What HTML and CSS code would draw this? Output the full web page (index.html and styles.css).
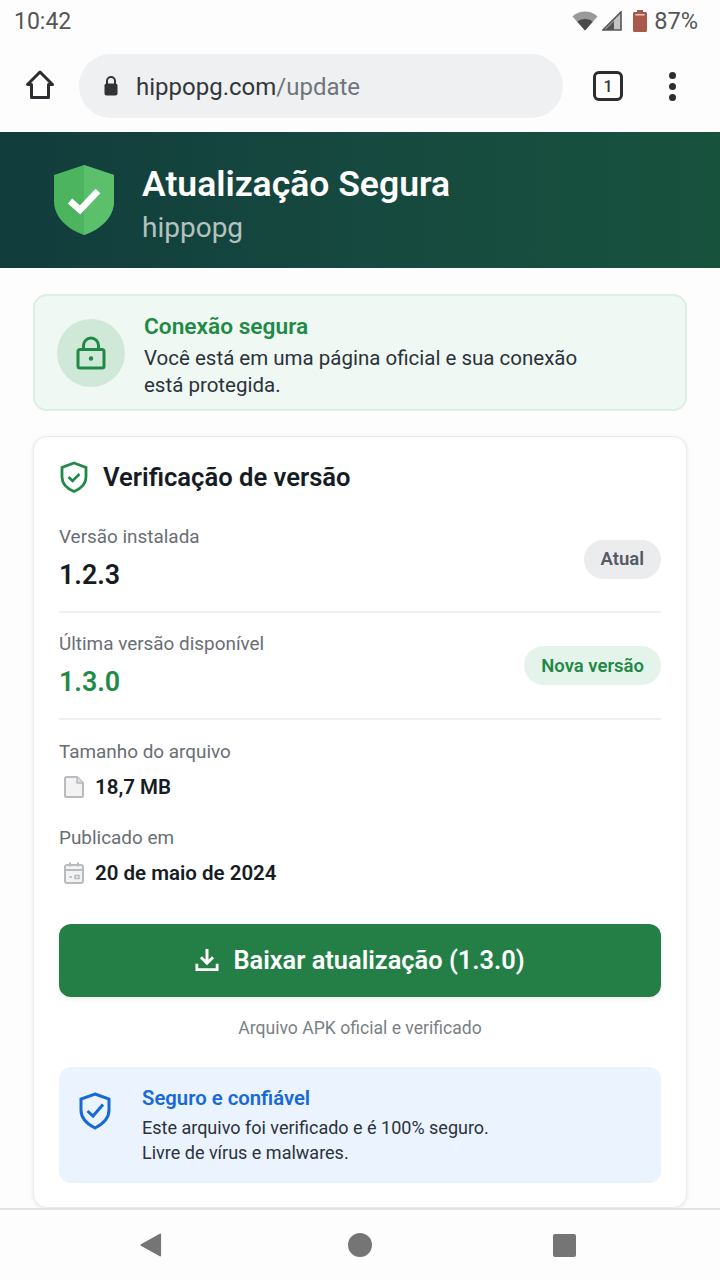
FILE: index.html
```html
<!DOCTYPE html>
<html lang="pt-BR">

<head>
    <meta charset="UTF-8">
    <meta name="viewport" content="width=device-width, initial-scale=1.0">
    <title>Atualização Segura</title>
    <link rel="stylesheet" href="styles.css">
</head>

<body>
    <div class="status-bar">
        <span class="clock">10:42</span>
        <div class="status-icons">
            <svg class="wifi" width="26" height="20" viewBox="0 0 26 20"><path d="M13 19.5 0.5 5.5C4 2.3 8.300 0.500 13 0.500S22 2.300 25.500 5.500Z" fill="#9a9a9a"/><path d="M13 19.500 5.300 10.800C7.300 9 10 8 13 8S18.700 9 20.700 10.800Z" fill="#4a4a4a"/></svg>
            <svg class="signal" width="20" height="20" viewBox="0 0 20 20"><path d="M19 1V19H1Z" fill="#c4c4c4"/><path d="M12 10V19H3L12 10Z" fill="#555"/><path d="M19 1V19H1Z" fill="none" stroke="#555" stroke-width="1.600"/></svg>
            <svg class="battery" width="14" height="22" viewBox="0 0 14 22"><path d="M4 0H10V2H12.500C13.300 2 14 2.700 14 3.500V20.500C14 21.300 13.300 22 12.500 22H1.500C.7 22 0 21.300 0 20.500V3.500C0 2.700 .7 2 1.500 2H4Z" fill="#a9584c"/><rect x="2.500" y="4" width="9" height="1.500" fill="#e5c9c4"/></svg>
            <span class="battery-text">87%</span>
        </div>
    </div>

    <div class="toolbar">
        <svg class="home-icon" width="32" height="32" viewBox="0 0 32 32"><path d="M16 3 3.500 15.500H7.500V28.500H24.500V15.500H28.500Z" fill="none" stroke="#2b2d30" stroke-width="3" stroke-linejoin="round"/></svg>
        <div class="omnibox">
            <svg width="14" height="20" viewBox="0 0 14 20"><path d="M3 8V5a4 4 0 0 1 8 0v3" fill="none" stroke="#333" stroke-width="2"/><rect x="0.500" y="7.500" width="13" height="12" rx="2" fill="#333"/></svg>
            <span class="url">hippopg.com<span class="url-path">/update</span></span>
        </div>
        <div class="tabs-btn">1</div>
        <div class="menu-btn"><i></i><i></i><i></i></div>
    </div>

    <header class="app-header">
        <svg width="62" height="72" viewBox="0 0 62 72">
            <path d="M31 1 61 11V37C61 53 48 65 31 71 14 65 1 53 1 37V11Z" fill="#4cb45e"/>
            <path d="M31 1 61 11V37C61 53 48 65 31 71Z" fill="#5cbf6c"/>
            <path d="M17 37 27 46 45 27" fill="none" stroke="#fff" stroke-width="6.500"/>
        </svg>
        <div>
            <h1>Atualização Segura</h1>
            <p>hippopg</p>
        </div>
    </header>

    <main class="content">
        <section class="secure-banner">
            <div class="lock-circle">
                <svg width="30" height="34" viewBox="0 0 30 34"><path d="M7.500 14V9.500a7.500 7.500 0 0 1 15 0V14" fill="none" stroke="#1f8a46" stroke-width="3"/><rect x="2" y="13.500" width="26" height="18.500" rx="2" fill="none" stroke="#1f8a46" stroke-width="3"/><circle cx="15" cy="22.500" r="2.200" fill="#1f8a46"/></svg>
            </div>
            <div class="banner-text">
                <h2>Conexão segura</h2>
                <p>Você está em uma página oficial e sua conexão<br>está protegida.</p>
            </div>
        </section>

        <section class="card">
            <div class="card-title">
                <svg width="28" height="32" viewBox="0 0 28 32"><path d="M14 2 26 6.500V16C26 23 21 27.500 14 30.500 7 27.500 2 23 2 16V6.500Z" fill="none" stroke="#1f8a46" stroke-width="2.800"/><path d="M8.500 16 12.500 20 19.500 13" fill="none" stroke="#1f8a46" stroke-width="2.600"/></svg>
                <h2>Verificação de versão</h2>
            </div>

            <div class="version-row">
                <div>
                    <div class="label">Versão instalada</div>
                    <div class="version">1.2.3</div>
                </div>
                <span class="pill pill-gray">Atual</span>
            </div>
            <div class="version-row">
                <div>
                    <div class="label">Última versão disponível</div>
                    <div class="version version-new">1.3.0</div>
                </div>
                <span class="pill pill-green">Nova versão</span>
            </div>

            <div class="details">
                <div class="label">Tamanho do arquivo</div>
                <div class="detail-value">
                    <svg width="20" height="22" viewBox="0 0 20 22"><path d="M2.500 1H13L19 7V19.500C19 20.300 18.300 21 17.500 21H2.500C1.700 21 1 20.300 1 19.500V2.500C1 1.700 1.700 1 2.500 1Z" fill="#f3f3f4" stroke="#b9bbbf" stroke-width="2"/><path d="M13 1V7H19" fill="#dcdde0" stroke="#b9bbbf" stroke-width="1.500"/></svg>
                    <span>18,7 MB</span>
                </div>
                <div class="label label-date">Publicado em</div>
                <div class="detail-value">
                    <svg width="20" height="22" viewBox="0 0 20 22"><rect x="1" y="3" width="18" height="18" rx="2" fill="#f3f3f4" stroke="#b9bbbf" stroke-width="2"/><path d="M1 8H19M6 0.500V4.500M14 0.500V4.500" stroke="#b9bbbf" stroke-width="2"/><path d="M5 15H8M11 13.500H15V16.500H11Z" stroke="#b9bbbf" stroke-width="1.500" fill="none"/></svg>
                    <span>20 de maio de 2024</span>
                </div>
            </div>

            <button type="button" class="download-btn">
                <svg width="24" height="24" viewBox="0 0 26 26"><path d="M13 1V16M6.500 10 13 16.500 19.500 10" fill="none" stroke="#fff" stroke-width="3.200"/><path d="M2 17V23.500H24V17" fill="none" stroke="#fff" stroke-width="3"/></svg>
                Baixar atualização (1.3.0)
            </button>
            <p class="download-note">Arquivo APK oficial e verificado</p>

            <div class="trust-box">
                <svg width="32" height="38" viewBox="0 0 32 38"><path d="M16 2 30 7V18C30 26 24 32 16 36 8 32 2 26 2 18V7Z" fill="none" stroke="#1769d8" stroke-width="3"/><path d="M8.500 19 14 24 24 12.500" fill="none" stroke="#1769d8" stroke-width="3"/></svg>
                <div>
                    <h3>Seguro e confiável</h3>
                    <p>Este arquivo foi verificado e é 100% seguro.<br>Livre de vírus e malwares.</p>
                </div>
            </div>
        </section>
    </main>

    <nav class="nav-bar">
        <svg width="22" height="24" viewBox="0 0 24 26"><path d="M1.500 13 22 1.500V24.500Z" fill="#757575" stroke="#757575" stroke-width="2" stroke-linejoin="round"/></svg>
        <div class="nav-home"></div>
        <div class="nav-square"></div>
    </nav>
</body>

</html>
```

FILE: styles.css
```css
* {
    box-sizing: border-box;
}

html, body {
    margin: 0;
    padding: 0;
}

body {
    width: 720px;
    height: 1280px;
    overflow: hidden;
    display: flex;
    flex-direction: column;
    font-family: Roboto, "Noto Sans", sans-serif;
    background-color: #fdfdfd;
    color: #161c24;
}

h1, h2, h3, p {
    margin: 0;
}

.status-bar {
    height: 40px;
    flex: none;
    padding: 2px 22px 0 14px;
    display: flex;
    align-items: center;
    justify-content: space-between;
    color: #555;
    font-size: 23px;
}

.status-icons {
    display: flex;
    align-items: center;
}

.signal {
    margin-left: 4px;
}

.battery {
    margin-left: 11px;
}

.battery-text {
    margin-left: 7px;
    font-size: 23.6px;
}

.toolbar {
    height: 92px;
    flex: none;
    display: flex;
    align-items: flex-start;
    padding-top: 14px;
}

.home-icon {
    margin: 15px 0 0 24px;
}

.omnibox {
    width: 484px;
    height: 64px;
    margin-left: 23px;
    padding-left: 25px;
    display: flex;
    align-items: center;
    gap: 18px;
    background-color: #eff0f2;
    border-radius: 32px;
}

.url {
    font-size: 24px;
    padding-top: 1px;
    color: #33363a;
}

.url-path {
    color: #70757a;
}

.tabs-btn {
    width: 30px;
    height: 30px;
    margin: 17px 0 0 30px;
    border: 3px solid #2b2d30;
    border-radius: 6px;
    display: flex;
    align-items: center;
    justify-content: center;
    font-size: 16px;
    font-weight: 500;
    color: #33363a;
}

.menu-btn {
    width: 8px;
    margin: 18px 0 0 46px;
    display: flex;
    flex-direction: column;
    gap: 4px;
}

.menu-btn i {
    width: 7px;
    height: 7px;
    border-radius: 50%;
    background-color: #2b2d30;
}

.app-header {
    height: 136px;
    flex: none;
    padding: 0 0 0 53px;
    display: flex;
    align-items: center;
    gap: 27px;
    background: linear-gradient(90deg, #113d3c 0%, #16493f 50%, #17523d 100%);
    color: #fff;
}

.app-header svg {
    flex: none;
}

.app-header h1 {
    font-size: 35.5px;
    font-weight: 600;
    line-height: 44px;
    margin: 9px 0 2px;
}

.app-header p {
    font-size: 28px;
    line-height: 40px;
    color: #b4c3bf;
}

.content {
    flex: 1;
    min-height: 0;
    overflow: hidden;
    padding: 26px 33px 0;
}

.secure-banner {
    height: 117px;
    padding: 0 22px;
    display: flex;
    align-items: center;
    gap: 19px;
    background-color: #eff8f3;
    border: 2px solid #dcefe3;
    border-radius: 14px;
}

.lock-circle {
    width: 68px;
    height: 68px;
    flex: none;
    display: flex;
    align-items: center;
    justify-content: center;
    background-color: #cfe8d8;
    border-radius: 50%;
}

.banner-text {
    padding-top: 6px;
}

.secure-banner h2 {
    font-size: 22.7px;
    font-weight: 600;
    line-height: 30px;
    color: #1f8a46;
}

.secure-banner p {
    font-size: 20.5px;
    line-height: 27px;
    color: #2b323b;
    margin-top: 3px;
}

.card {
    margin-top: 25px;
    height: 772px;
    padding: 23px 25px;
    background-color: #fff;
    border: 1px solid #eaeaec;
    border-radius: 14px;
    box-shadow: 0 1px 4px rgba(0, 0, 0, 0.08);
}

.card-title {
    height: 34px;
    display: flex;
    align-items: center;
    gap: 15px;
    padding-left: 1px;
}

.card-title h2 {
    font-size: 25.6px;
    font-weight: 600;
}

.version-row {
    height: 107px;
    display: flex;
    align-items: center;
    justify-content: space-between;
    border-bottom: 2px solid #f0f0f1;
}

.version-row + .version-row > div {
    margin-top: -2px;
}

.card-title + .version-row {
    height: 119px;
    padding-top: 9px;
}

.card-title + .version-row .pill {
    margin-top: 4px;
}

.label {
    font-size: 18.9px;
    line-height: 26px;
    color: #696e75;
}

.version {
    margin-top: 9px;
    font-size: 26.8px;
    font-weight: 600;
    line-height: 32px;
}

.version-new {
    color: #1f8a46;
}

.pill {
    height: 39px;
    padding: 0 17px;
    display: flex;
    align-items: center;
    border-radius: 20px;
    font-size: 18.5px;
    font-weight: 600;
}

.pill-gray {
    background-color: #ebecee;
    color: #555a62;
}

.pill-green {
    background-color: #e5f4ea;
    color: #1f8a46;
}

.details {
    padding-top: 19px;
}

.label-date {
    margin-top: 20px;
}

.detail-value {
    margin-top: 4px;
    height: 36px;
    padding-left: 5px;
    display: flex;
    align-items: center;
    gap: 11px;
    font-size: 20.5px;
    font-weight: 600;
}

.download-btn {
    width: 100%;
    height: 73px;
    margin-top: 33px;
    padding: 0 0 2px;
    display: flex;
    align-items: center;
    justify-content: center;
    gap: 14px;
    background-color: #237f46;
    color: #fff;
    border: none;
    border-radius: 12px;
    font-family: inherit;
    font-size: 25.4px;
    font-weight: 600;
    box-shadow: 0 3px 4px rgba(0, 0, 0, 0.06);
}

.download-note {
    margin-top: 19px;
    text-align: center;
    font-size: 17.6px;
    line-height: 24px;
    color: #7b7f85;
}

.trust-box {
    height: 116px;
    margin-top: 27px;
    padding: 17px 0 0 20px;
    display: flex;
    align-items: flex-start;
    gap: 31px;
    background-color: #eaf3fe;
    border-radius: 12px;
}

.trust-box svg {
    flex: none;
    margin-top: 8px;
}

.trust-box h3 {
    font-size: 20.3px;
    font-weight: 600;
    line-height: 28px;
    color: #1769d8;
}

.trust-box p {
    margin-top: 3px;
    font-size: 18px;
    line-height: 25px;
    color: #2b323b;
}

.nav-bar {
    height: 72px;
    flex: none;
    display: flex;
    align-items: center;
    padding: 0 144px 0 140px;
    justify-content: space-between;
    background-color: #fdfdfd;
    border-top: 2px solid #e4e4e4;
}

.nav-home {
    width: 24px;
    height: 24px;
    margin-left: 5px;
    border-radius: 50%;
    background-color: #757575;
}

.nav-square {
    width: 23px;
    height: 23px;
    border-radius: 2px;
    background-color: #757575;
}
```
